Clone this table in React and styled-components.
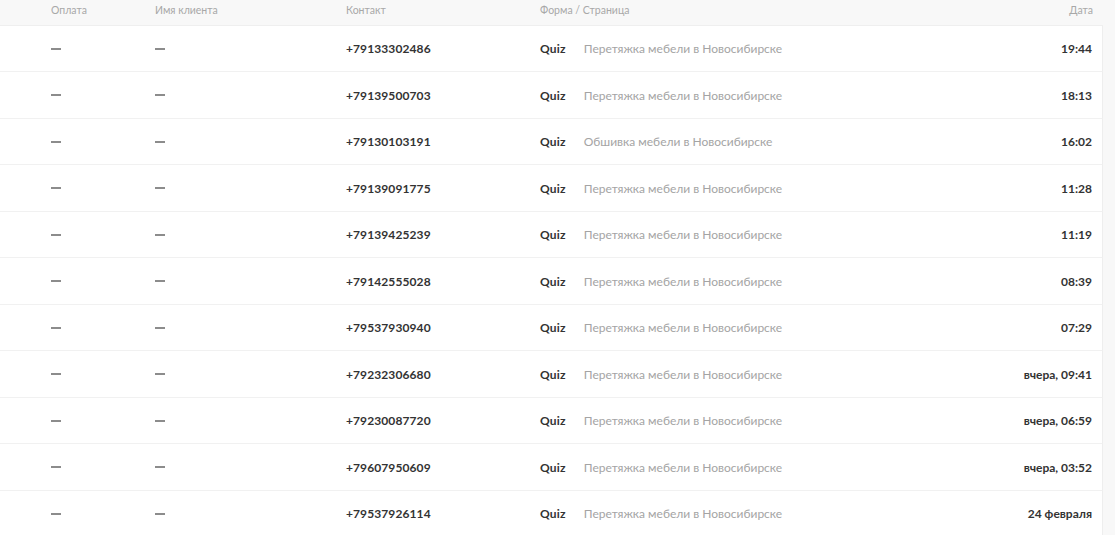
import React from "react";
import styled, { createGlobalStyle } from "styled-components";

const Global = createGlobalStyle`
  html, body { margin: 0; padding: 0; background: #f8f8f8; }
  body { font-family: Lato, "Open Sans", "Noto Sans", sans-serif; -webkit-font-smoothing: antialiased; }
`;

const Page = styled.div`
  width: 1115px;
  height: 535px;
  overflow: hidden;
  background: #f8f8f8;
`;

const Table = styled.div`
  width: 1103px;
  display: flex;
  flex-direction: column;
`;

const cols = `104px 191px 194px 1fr auto`;

const HeadRow = styled.div`
  display: grid;
  grid-template-columns: ${cols};
  align-items: center;
  height: 26px;
  padding: 0 10px 0 51px;
  box-sizing: border-box;
  border-bottom: 1px solid #efefef;
`;

const HeadCell = styled.div`
  font-size: 10.5px;
  color: #a8a8a8;
  font-weight: 400;
  text-align: ${(p) => (p.$right ? "right" : "left")};
  margin-top: -6px;
`;

const Row = styled.div`
  display: grid;
  grid-template-columns: ${cols};
  align-items: center;
  height: ${(p) => (p.$tall ? 47 : 46)}px;
  padding: 0 10px 0 51px;
  box-sizing: border-box;
  background: #fff;
  border-bottom: 1px solid #f1f1f1;
  border-right: 1px solid #eeeeee;
`;

const Dash = styled.div`
  width: 10px;
  height: 2px;
  background: #8c8c8c;
`;

const Phone = styled.div`
  font-size: 12px;
  font-weight: 700;
  color: #333;
  letter-spacing: 0.1px;
`;

const Form = styled.div`
  display: flex;
  align-items: center;
  gap: 18px;
  font-size: 12px;
`;

const FormName = styled.span`
  font-weight: 700;
  color: #333;
  letter-spacing: 0.2px;
`;

const PageName = styled.span`
  color: #a4a4a4;
`;

const DateCell = styled.div`
  font-size: 12px;
  font-weight: 700;
  color: #333;
  text-align: right;
`;

const rows = [
  ["+79133302486", "Перетяжка мебели в Новосибирске", "19:44"],
  ["+79139500703", "Перетяжка мебели в Новосибирске", "18:13"],
  ["+79130103191", "Обшивка мебели в Новосибирске", "16:02"],
  ["+79139091775", "Перетяжка мебели в Новосибирске", "11:28"],
  ["+79139425239", "Перетяжка мебели в Новосибирске", "11:19"],
  ["+79142555028", "Перетяжка мебели в Новосибирске", "08:39"],
  ["+79537930940", "Перетяжка мебели в Новосибирске", "07:29"],
  ["+79232306680", "Перетяжка мебели в Новосибирске", "вчера, 09:41"],
  ["+79230087720", "Перетяжка мебели в Новосибирске", "вчера, 06:59"],
  ["+79607950609", "Перетяжка мебели в Новосибирске", "вчера, 03:52"],
  ["+79537926114", "Перетяжка мебели в Новосибирске", "24 февраля"],
];

export default function App() {
  return (
    <Page>
      <Global />
      <Table>
        <HeadRow>
          <HeadCell>Оплата</HeadCell>
          <HeadCell>Имя клиента</HeadCell>
          <HeadCell>Контакт</HeadCell>
          <HeadCell>Форма / Страница</HeadCell>
          <HeadCell $right>Дата</HeadCell>
        </HeadRow>
        {rows.map(([phone, page, date], i) => (
          <Row key={phone} $tall={i % 2 === 1}>
            <Dash />
            <Dash />
            <Phone>{phone}</Phone>
            <Form>
              <FormName>Quiz</FormName>
              <PageName>{page}</PageName>
            </Form>
            <DateCell>{date}</DateCell>
          </Row>
        ))}
      </Table>
    </Page>
  );
}
